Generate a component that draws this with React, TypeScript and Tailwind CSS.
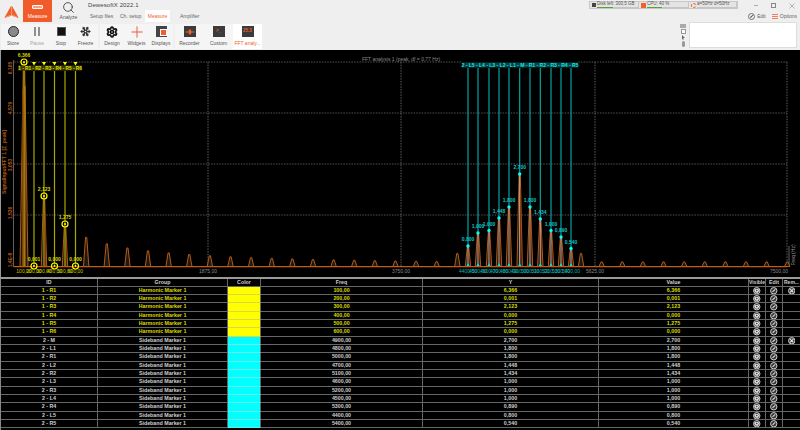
import { Search, Settings, Plus, Snowflake } from "lucide-react";

const fx = (f: number) => 14 + f * 0.1031;

const harmonics = [
  { x: 24, y: 62, val: "6,366", label: "100,00" },
  { x: 34, y: 266, val: "0,001", label: "200,00" },
  { x: 44, y: 196, val: "2,123", label: "300,00" },
  { x: 54.5, y: 266, val: "0,000", label: "400,00" },
  { x: 65, y: 224, val: "1,275", label: "500,00" },
  { x: 75.5, y: 266, val: "0,000", label: "600,00" },
];

const sidebands = [
  { x: 468, y: 246, val: "0,800", label: "4400,00" },
  { x: 478, y: 233, val: "1,000", label: "4500,00" },
  { x: 489, y: 230.5, val: "1,000", label: "4600,00" },
  { x: 499, y: 218, val: "1,448", label: "4700,00" },
  { x: 509, y: 207, val: "1,800", label: "4800,00" },
  { x: 519.7, y: 174, val: "2,700", label: "4900,00" },
  { x: 530, y: 207, val: "1,800", label: "5000,00" },
  { x: 540.3, y: 219, val: "1,434", label: "5100,00" },
  { x: 551, y: 230.5, val: "1,000", label: "5200,00" },
  { x: 561, y: 237, val: "0,890", label: "5300,00" },
  { x: 571, y: 248.5, val: "0,540", label: "5400,00" },
];

const rows = [
  ["1 - R1", "Harmonic Marker 1", "100,00", "6,366"],
  ["1 - R2", "Harmonic Marker 1", "200,00", "0,001"],
  ["1 - R3", "Harmonic Marker 1", "300,00", "2,123"],
  ["1 - R4", "Harmonic Marker 1", "400,00", "0,000"],
  ["1 - R5", "Harmonic Marker 1", "500,00", "1,275"],
  ["1 - R6", "Harmonic Marker 1", "600,00", "0,000"],
  ["2 - M", "Sideband Marker 1", "4900,00", "2,700"],
  ["2 - L1", "Sideband Marker 1", "4800,00", "1,800"],
  ["2 - R1", "Sideband Marker 1", "5000,00", "1,800"],
  ["2 - L2", "Sideband Marker 1", "4700,00", "1,448"],
  ["2 - R2", "Sideband Marker 1", "5100,00", "1,434"],
  ["2 - L3", "Sideband Marker 1", "4600,00", "1,000"],
  ["2 - R3", "Sideband Marker 1", "5200,00", "1,000"],
  ["2 - L4", "Sideband Marker 1", "4500,00", "1,000"],
  ["2 - R4", "Sideband Marker 1", "5300,00", "0,890"],
  ["2 - L5", "Sideband Marker 1", "4400,00", "0,800"],
  ["2 - R5", "Sideband Marker 1", "5400,00", "0,540"],
];

function Peak({ x, top, w = 2.7 }: { x: number; top: number; w?: number }) {
  return (
    <path d={`M${x - w} 266.5 L${x - 0.6} ${top} L${x + 0.6} ${top} L${x + w} 266.5Z`} fill="#1c1a18" stroke="#c05e12" strokeWidth="0.95" />
  );
}

function Chart() {
  const odd: number[] = [];
  for (let f = 700; f <= 7500; f += 200) {
    if (f > 4300 && f < 5500) continue;
    odd.push(f);
  }
  const height = (f: number) => {
    if (f === 4300 || f === 5500) return 13;
    return Math.max(204 / (f / 100), 4.6);
  };
  return (
    <svg width="799" height="227" viewBox="1 50 799 227">
      {/* grid */}
      {[62, 113, 164, 215].map((y) => (
        <line key={y} x1="14" x2="787" y1={y} y2={y} stroke="#777" strokeWidth="0.7" strokeDasharray="1.5 1.2" />
      ))}
      {[208, 401, 595, 787].map((x) => (
        <line key={x} x1={x} x2={x} y1="62" y2="266" stroke="#777" strokeWidth="0.8" strokeDasharray="1.5 1.2" />
      ))}
      <line x1="13.5" x2="13.5" y1="60" y2="267" stroke="#777" strokeWidth="0.8" />
      <line x1="789" x2="789" y1="246" y2="267" stroke="#777" strokeWidth="0.8" />

      {/* y axis */}
      {[["6,105", 68], ["4,579", 108], ["3,053", 165], ["1,526", 213], ["1,4E-8", 260]].map(([t, y]) => (
        <text key={t} fontSize="5" fontWeight="bold" fill="#b05a14" textAnchor="middle" transform={`translate(11.5 ${y}) rotate(-90)`}>{t}</text>
      ))}
      <text fontSize="5" fontWeight="bold" fill="#b05a14" textAnchor="middle" transform="translate(6 162) rotate(-90)">SignalInput/FFT 1 [Z_peak]</text>

      <text x="401" y="60.5" fontSize="5" fill="#8a8a8a" textAnchor="middle">FFT analysis 1 (peak, df = 0,77 Hz)</text>
      <text fontSize="5" fill="#9a9a9a" textAnchor="middle" transform="translate(794.5 255) rotate(-90)">Freq (Hz)</text>

      {/* x axis */}
      {[["1875,00", 208], ["3750,00", 401], ["5625,00", 595], ["7500,00", 779]].map(([t, x]) => (
        <text key={t} x={x} y="272.5" fontSize="5" fill="#8a8a8a" textAnchor="middle">{t}</text>
      ))}

      {/* spectrum */}
      <Peak x={24} top={62} w={4} />
      <line x1="22.5" x2="22.5" y1="90" y2="266" stroke="#a0300a" strokeWidth="1" />
      <line x1="25" x2="25" y1="86" y2="266" stroke="#d07a10" strokeWidth="1" />
      <Peak x={44} top={196} />
      <line x1="45.5" x2="45.5" y1="215" y2="266" stroke="#a0300a" strokeWidth="0.8" />
      <Peak x={65} top={224} />
      <line x1="66" x2="66" y1="234" y2="266" stroke="#a0300a" strokeWidth="0.8" />
      {odd.map((f) => (
        <Peak key={f} x={fx(f)} top={266.5 - height(f)} />
      ))}
      {sidebands.map((s) => (
        <g key={s.x}>
          <Peak x={s.x} top={s.y} />
          <line x1={s.x} x2={s.x} y1={s.y} y2="266" stroke="#cdb09a" strokeWidth="1" />
          <line x1={s.x + 1} x2={s.x + 1} y1={s.y + 14} y2="266" stroke="#9c2c0a" strokeWidth="0.5" />
        </g>
      ))}
      <line x1="14" x2="787" y1="266.7" y2="266.7" stroke="#c25c10" strokeWidth="1.2" />

      {/* harmonic markers */}
      {harmonics.map((h) => (
        <line key={h.x} x1={h.x} x2={h.x} y1="71" y2="266" stroke="#a8a800" strokeWidth="1.2" />
      ))}
      {harmonics.slice(1).map((h) => (
        <path key={h.x} d={`M${h.x - 2} 62 L${h.x + 2} 62 L${h.x} 65.5Z`} fill="#ffff00" />
      ))}
      <rect x="18" y="65.5" width="64" height="5" fill="#3a3a00" />
      <text x="50" y="69.8" fontSize="4.7" fontWeight="bold" fill="#e0e000" textAnchor="middle">1 - R1 - R2 - R3 - R4 - R5 - R6</text>
      {harmonics.map((h) => (
        <g key={h.x}>
          <circle cx={h.x} cy={h.y} r="3" fill="#000" fillOpacity="0.4" stroke="#ffff00" strokeWidth="1.2" />
          <circle cx={h.x} cy={h.y} r="1" fill="#ffff00" />
          <text x={h.x} y={h.y - 4.8} fontSize="5" fontWeight="bold" fill="#d8d800" textAnchor="middle">{h.val}</text>
          <text x={h.x} y="272.5" fontSize="5" fill="#c8c800" textAnchor="middle">{h.label}</text>
        </g>
      ))}

      {/* sideband markers */}
      {sidebands.map((s) => (
        <g key={s.x}>
          <line x1={s.x} x2={s.x} y1="68" y2={s.y} stroke="#00a5a5" strokeWidth="1.2" />
          <path d={`M${s.x - 1.6} 266 L${s.x + 1.6} 266 L${s.x} 263Z`} fill="#00e0e0" />
          <circle cx={s.x} cy={s.y} r="1.7" fill="#00ffff" />
          <text x={s.x} y={s.y - 5} fontSize="5" fontWeight="bold" fill="#12c4c4" textAnchor="middle">{s.val}</text>
          <text x={s.x} y="272.5" fontSize="5" fill="#10b0b0" textAnchor="middle">{s.label}</text>
        </g>
      ))}
      <rect x="462" y="60" width="116" height="8" fill="#000" />
      <rect x="462" y="62.5" width="116" height="5" fill="#004848" />
      <text x="520" y="66.8" fontSize="5" fontWeight="bold" fill="#20e0e0" textAnchor="middle">2 - L5 - L4 - L3 - L2 - L1 - M - R1 - R2 - R3 - R4 - R5</text>
    </svg>
  );
}

function RoundIcon({ kind }: { kind: "eye" | "edit" | "x" }) {
  return (
    <svg width="7.5" height="7.5" viewBox="0 0 14 14">
      <circle cx="7" cy="7" r="6" fill="#3a3a3a" stroke="#dcdcdc" strokeWidth="1.7" />
      {kind === "eye" && <path d="M2 6 L4.5 3.5 H9.5 L12 6 L9 10.5 H5Z" fill="#dcdcdc" />}
      {kind === "eye" && <circle cx="7" cy="6.5" r="1.4" fill="#333" />}
      {kind === "edit" && <path d="M4 10 L5 7.5 L9.5 3.5 L10.5 4.5 L6.5 9Z" fill="#eee" />}
      {kind === "x" && <path d="M4 4 L10 10 M10 4 L4 10" stroke="#eee" strokeWidth="2" />}
    </svg>
  );
}

function Row({ row, index }: { row: string[]; index: number }) {
  const yellow = index < 6;
  const text = yellow ? "text-[#dcdc00]" : "text-[#cfcfcf]";
  const cell = "flex items-center justify-center border-b border-r border-[#666]";
  return (
    <div className={`flex h-[8.33px] font-bold ${text}`}>
      <div className={`${cell} w-[97px]`}>{row[0]}</div>
      <div className={`${cell} w-[130px]`}>{row[1]}</div>
      <div className={`w-[33px] border-b border-r border-r-[#666] ${yellow ? "border-b-[#d8d850] bg-[#ffff00]" : "border-b-[#70e8e8] bg-[#00ffff]"}`}></div>
      <div className={`${cell} w-[162px]`}>{row[2]}</div>
      <div className={`${cell} w-[176px]`}>{row[3]}</div>
      <div className={`${cell} w-[150px]`}>{row[3]}</div>
      <div className={`${cell} w-[17px]`}><RoundIcon kind="eye" /></div>
      <div className={`${cell} w-[17px]`}><RoundIcon kind="edit" /></div>
      <div className="flex flex-1 items-center justify-center border-b border-[#666]">
        {index === 0 || index === 6 ? <RoundIcon kind="x" /> : null}
      </div>
    </div>
  );
}

function MarkerTable() {
  const head = "flex items-center justify-center border-r border-[#666]";
  return (
    <div className="flex-1 border-l border-[#888] bg-black text-[5.3px] leading-none">
      <div className="flex h-[7.7px] border-b border-[#666] font-bold text-[#cfcfcf]">
        <div className={`${head} w-[97px]`}>ID</div>
        <div className={`${head} w-[130px]`}>Group</div>
        <div className={`${head} w-[33px]`}>Color</div>
        <div className={`${head} w-[162px]`}>Freq</div>
        <div className={`${head} w-[176px]`}>Y</div>
        <div className={`${head} w-[150px]`}>Value</div>
        <div className={`${head} w-[17px] text-[5px]`}>Visible</div>
        <div className={`${head} w-[17px]`}>Edit</div>
        <div className="flex flex-1 items-center justify-center text-[5px]">Rem...</div>
      </div>
      {rows.map((row, i) => (
        <Row key={row[0]} row={row} index={i} />
      ))}
    </div>
  );
}

function Tool({ label, width, icon, muted, active }: { label: string; width: string; icon: React.ReactNode; muted?: boolean; active?: boolean }) {
  return (
    <div className={`flex h-full flex-col items-center pt-[1px] ${width} ${active ? "bg-white text-[#f0602c]" : muted ? "text-[#a8a8a8]" : "text-[#555]"}`}>
      <div className="flex h-[13px] items-center justify-center">{icon}</div>
      <div className="mt-[3px] whitespace-nowrap text-[5px] leading-none">{label}</div>
    </div>
  );
}

function DarkTile({ children }: { children: React.ReactNode }) {
  return <div className="flex h-[11px] w-[12px] items-center justify-center bg-[#3b3b3b] text-[4.5px] font-bold leading-none text-[#f0602c]">{children}</div>;
}

function Toolbar() {
  return (
    <div className="flex h-[28px]">
      <div className="ml-[1px] mt-[2px] flex h-[25px] bg-[#f5f5f5]">
        <Tool label="Store" width="w-[24px]" icon={<div className="size-[11px] rounded-full border-[1.5px] border-[#222] bg-[#8a8a8a]" />} />
        <Tool
          label="Pause"
          width="w-[24px]"
          muted
          icon={
            <div className="flex gap-[2px]">
              <div className="h-[9px] w-[2px] bg-[#8f8f8f]" />
              <div className="h-[9px] w-[2px] bg-[#8f8f8f]" />
            </div>
          }
        />
        <Tool label="Stop" width="w-[24px]" icon={<div className="size-[9px] border border-[#555] bg-[#111]" />} />
        <Tool label="Freeze" width="w-[25px]" icon={<Snowflake size={11} strokeWidth={2.6} className="text-[#333]" />} />
      </div>
      <div className="ml-[2px] mt-[2px] flex h-[25px] bg-[#f5f5f5]">
        <Tool label="Design" width="w-[24px]" icon={<Settings size={12} strokeWidth={3.4} className="text-[#111]" />} />
        <Tool label="Widgets" width="w-[25px]" icon={<Plus size={18} strokeWidth={1.3} className="text-[#ee5b2f]" />} />
        <Tool
          label="Displays"
          width="w-[24px]"
          icon={
            <div className="flex h-[11px] w-[11px] justify-end bg-[#444] pl-[3px] pt-[3px]">
              <div className="size-[7px] border border-white bg-[#f0602c]" />
            </div>
          }
        />
      </div>
      <div className="ml-[2px] mt-[2px] flex h-[25px] bg-[#f5f5f5]">
        <Tool
          label="Recorder"
          width="w-[29px]"
          icon={
            <DarkTile>
              <svg width="10" height="6" viewBox="0 0 9 6">
                <path d="M0 2.4H3L3.6 0.5H5.4L6 2.4H9V3.6H6L5.4 5.5H3.6L3 3.6H0Z" fill="#f0602c" />
              </svg>
            </DarkTile>
          }
        />
        <Tool label="Custom" width="w-[29px]" icon={<DarkTile>&gt;_</DarkTile>} />
        <Tool label="FFT analy..." width="w-[29px]" active icon={<DarkTile>25.3</DarkTile>} />
      </div>
      <div className="ml-auto mt-[2px] flex flex-col items-center gap-[1px] pr-[1px]">
        <div className="h-[4px] w-[6px] bg-[#aaa]" />
        <div className="h-[5px] w-[5px] border border-[#999] bg-white" />
        <svg width="5" height="5" viewBox="0 0 5 5"><path d="M1 0 L4 3 H2.4 L2.4 5 L1 4Z" fill="#666" /></svg>
        <div className="h-[6px] w-[3px] rounded-sm bg-[#999]" />
      </div>
      <div className="mb-[2px] ml-[2px] mr-[3px] w-[108px] border border-[#ddd] bg-white" />
    </div>
  );
}

function StatusCell({ width, icon, label, bar }: { width: string; icon: React.ReactNode; label: string; bar?: string }) {
  return (
    <div className={`flex h-full items-center gap-[1px] border-r border-[#c8c8c8] pl-[2px] ${width}`}>
      {icon}
      <div className="flex-1">
        <div className="whitespace-nowrap text-[4.5px] leading-[4.5px] text-[#555]">{label}</div>
        <div className="h-[1.5px] w-full bg-[#c4c4c4]">{bar && <div className={`h-full bg-[#55a630] ${bar}`} />}</div>
      </div>
    </div>
  );
}

function TopRow() {
  return (
    <div className="flex h-[22px]">
      <div className="flex w-[23px] items-center justify-center pb-[2px] pt-[3px]">
        <svg width="15" height="14" viewBox="0 0 15 14">
          <path d="M7.5 1 L14 12.5 L7.5 10 L1 12.5Z" fill="#f0602c" stroke="#f0602c" strokeWidth="1" strokeLinejoin="round" />
          <path d="M7.5 1 V10 L1 12.5 M7.5 10 L14 12.5" stroke="#f8c0a8" strokeWidth="0.6" fill="none" />
        </svg>
      </div>
      <div className="flex w-[29px] flex-col items-center bg-[#f15a29] text-white">
        <div className="mt-[5px] h-[4px] w-[11px] rounded-[1px] border border-white bg-[#f6a080]" />
        <div className="mt-[4.5px] text-[5px] leading-none">Measure</div>
      </div>
      <div className="flex w-[33px] flex-col items-center text-[#555]">
        <Search size={13} strokeWidth={1.5} className="mt-px text-[#333]" />
        <div className="mt-[1px] text-[5px] leading-none">Analyze</div>
      </div>
      <div className="ml-[2px] flex flex-col">
        <div className="ml-[1px] mt-[2px] h-[8px] whitespace-nowrap text-[6px] font-medium leading-[6px] tracking-[0.1px] text-[#444]">DewesoftX 2022.1</div>
        <div className="flex h-[12px] items-center text-[5px] leading-none text-[#666]">
          <div className="ml-[3px] w-[30px]">Setup files</div>
          <div className="w-[25px]">Ch. setup</div>
          <div className="flex h-full w-[25px] items-center justify-center bg-white text-[#f0602c]">Measure</div>
          <div className="ml-[10px]">Amplifier</div>
        </div>
      </div>
      <div className="ml-auto flex w-[211px] flex-col">
        <div className="flex h-[11px]">
          <div className="mt-[1px] flex h-[8px] w-[149px] border border-[#c8c8c8] bg-[#e4e4e4]">
            <StatusCell width="w-[49px]" icon={<div className="size-[4px] bg-[#444]" />} label="Disk left: 300,5 GB" bar="w-[40%]" />
            <StatusCell width="w-[50px]" icon={<div className="size-[5px] bg-[#f0602c]" />} label="CPU: 40 %" bar="w-[37%]" />
            <StatusCell width="flex-1" icon={<div className="size-[5px] rounded-full border border-dashed border-[#f0602c]" />} label="a=50Hz d=50Hz" />
          </div>
          <div className="ml-[16px] mt-[1px] flex items-start">
            <div className="mt-[4px] h-px w-[4px] bg-[#aaa]" />
            <div className="ml-[13px] mt-[2px] size-[5px] border border-[#888]" />
            <svg className="ml-[13px] mt-[1.5px]" width="6" height="6" viewBox="0 0 6 6"><path d="M0.5 0.5 L5.5 5.5 M5.5 0.5 L0.5 5.5" stroke="#999" strokeWidth="0.7" /></svg>
          </div>
        </div>
        <div className="mt-[1.5px] flex items-center justify-end pr-[3px] text-[5px] leading-none text-[#666]">
          <svg width="7" height="7" viewBox="0 0 14 14">
            <circle cx="7" cy="7" r="6" fill="none" stroke="#444" strokeWidth="1.4" />
            <path d="M4 10 L5 7.5 L9.5 3.5 L10.5 4.5 L6.5 9Z" fill="#444" />
          </svg>
          <span className="ml-[2px]">Edit</span>
          <div className="ml-[6px] flex h-[5px] w-[6px] flex-col justify-between">
            <div className="h-px bg-[#f0805c]" />
            <div className="h-px bg-[#f0805c]" />
            <div className="h-px bg-[#f0805c]" />
          </div>
          <span className="ml-[2px]">Options</span>
        </div>
      </div>
    </div>
  );
}

export default function App() {
  return (
    <div className="flex h-[430px] w-[800px] flex-col overflow-hidden bg-black font-['Liberation_Sans',sans-serif]">
      <div className="h-[50px] bg-[#efefef]">
        <TopRow />
        <Toolbar />
      </div>
      <div className="h-[227px] border-l border-[#999] bg-black">
        <Chart />
      </div>
      <div className="h-[2px] bg-[#9a9a9a]" />
      <MarkerTable />
    </div>
  );
}
